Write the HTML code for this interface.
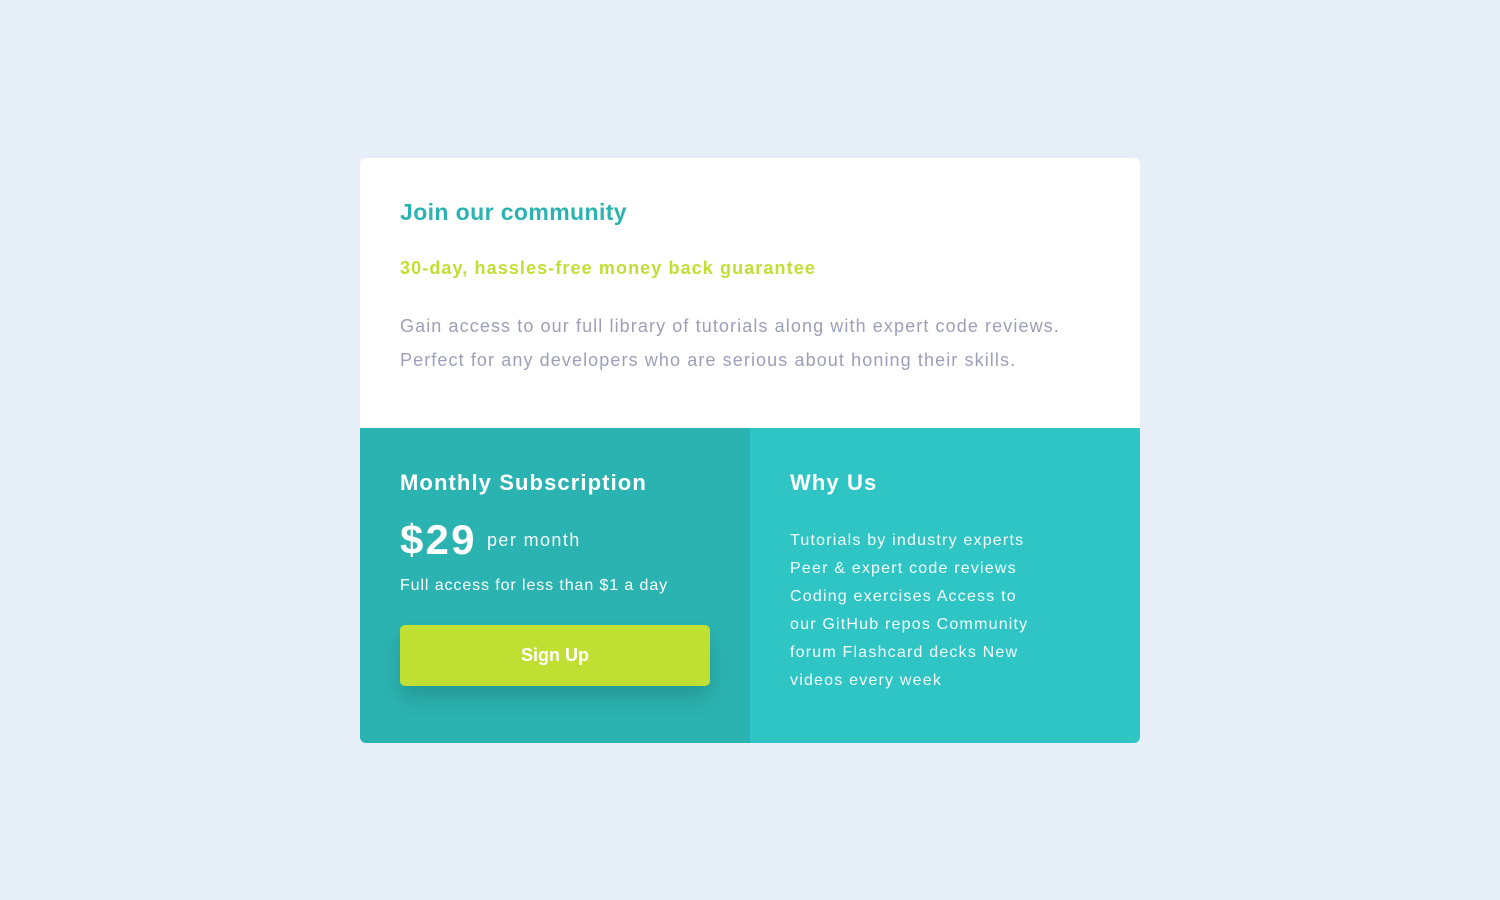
<!DOCTYPE html>
<html><head><meta charset="utf-8"><style>
*{margin:0;padding:0;box-sizing:border-box}
body{width:1500px;height:900px;background:#e6eff7;font-family:"Liberation Sans",sans-serif;position:relative}
.card{position:absolute;left:360px;top:158px;width:780px;height:585px;border-radius:6px;overflow:hidden;background:#fff}
h1{position:absolute;left:40px;top:41px;font-size:23px;color:#2bb3b1;font-weight:bold;letter-spacing:0.4px}
h2{position:absolute;left:40px;top:100px;font-size:18px;color:#bfe032;font-weight:bold;letter-spacing:1.1px;white-space:nowrap}
.desc{position:absolute;left:40px;top:151px;font-size:18px;line-height:34px;color:#9b9fb8;width:740px;letter-spacing:1.1px;white-space:nowrap}
.l{position:absolute;left:0;top:270px;width:390px;height:315px;background:#2bb3b1;color:#fff}
.r{position:absolute;left:390px;top:270px;width:390px;height:315px;background:#30c5c5;color:#fff}
.h3{position:absolute;left:40px;top:42px;font-size:22px;font-weight:bold;letter-spacing:1.1px}
.price{position:absolute;left:40px;top:88px;font-size:42px;font-weight:bold;letter-spacing:2.2px}
.pm{position:absolute;left:127px;top:102px;font-size:18px;opacity:.95;letter-spacing:1.4px}
.fa{position:absolute;left:40px;top:149px;font-size:16px;letter-spacing:0.9px}
.btn{position:absolute;left:40px;top:197px;width:310px;height:61px;background:#bfe032;border-radius:5px;box-shadow:0 12px 20px rgba(0,0,0,.15);font-size:18px;font-weight:bold;text-align:center;line-height:61px}
.why{position:absolute;left:40px;top:99px;font-size:16px;line-height:28px;white-space:nowrap;opacity:.95;letter-spacing:1.2px}
</style></head><body>
<div class="card">
<h1>Join our community</h1>
<h2>30-day, hassles-free money back guarantee</h2>
<div class="desc">Gain access to our full library of tutorials along with expert code reviews.<br>Perfect for any developers who are serious about honing their skills.</div>
<div class="l"><div class="h3">Monthly Subscription</div><div class="price">$29</div><div class="pm">per month</div><div class="fa">Full access for less than $1 a day</div><div class="btn">Sign Up</div></div>
<div class="r"><div class="h3">Why Us</div><div class="why">Tutorials by industry experts<br>Peer &amp; expert code reviews<br>Coding exercises Access to<br>our GitHub repos Community<br>forum Flashcard decks New<br>videos every week</div></div>
</div>
</body></html>
